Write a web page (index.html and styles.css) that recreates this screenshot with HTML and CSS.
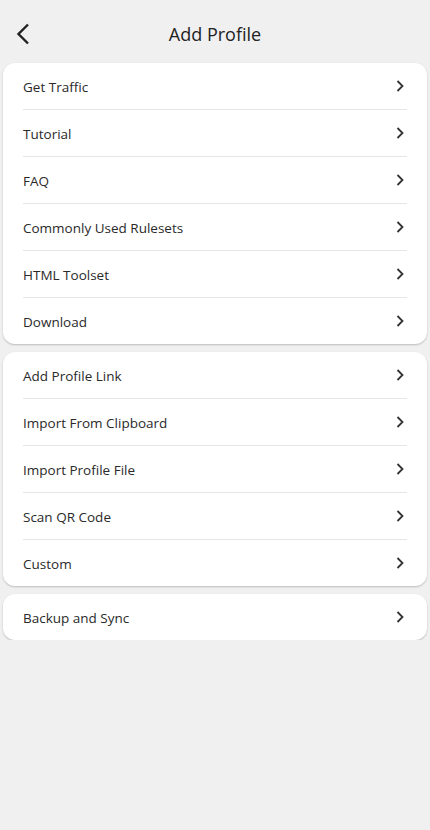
FILE: index.html
```html
<!DOCTYPE html>
<html lang="en">
<head>
<meta charset="utf-8">
<title>Add Profile</title>
<link rel="stylesheet" href="styles.css">
</head>
<body>
<header class="topbar">
  <button class="back" aria-label="Back">
    <svg width="14" height="22" viewBox="0 0 14 22"><path d="M12 1.5 L2.5 11 L12 20.5" fill="none" stroke="#222" stroke-width="2.4"/></svg>
  </button>
  <h1 class="title">Add Profile</h1>
</header>
<main class="content">
  <section class="card">
    <div class="row"><span>Get Traffic</span><svg class="chev" width="8" height="12" viewBox="0 0 8 12"><path d="M1.5 1 L6.5 6 L1.5 11" fill="none" stroke="#333" stroke-width="1.8"/></svg></div>
    <div class="row"><span>Tutorial</span><svg class="chev" width="8" height="12" viewBox="0 0 8 12"><path d="M1.5 1 L6.5 6 L1.5 11" fill="none" stroke="#333" stroke-width="1.8"/></svg></div>
    <div class="row"><span>FAQ</span><svg class="chev" width="8" height="12" viewBox="0 0 8 12"><path d="M1.5 1 L6.5 6 L1.5 11" fill="none" stroke="#333" stroke-width="1.8"/></svg></div>
    <div class="row"><span>Commonly Used Rulesets</span><svg class="chev" width="8" height="12" viewBox="0 0 8 12"><path d="M1.5 1 L6.5 6 L1.5 11" fill="none" stroke="#333" stroke-width="1.8"/></svg></div>
    <div class="row"><span>HTML Toolset</span><svg class="chev" width="8" height="12" viewBox="0 0 8 12"><path d="M1.5 1 L6.5 6 L1.5 11" fill="none" stroke="#333" stroke-width="1.8"/></svg></div>
    <div class="row"><span>Download</span><svg class="chev" width="8" height="12" viewBox="0 0 8 12"><path d="M1.5 1 L6.5 6 L1.5 11" fill="none" stroke="#333" stroke-width="1.8"/></svg></div>
  </section>
  <section class="card">
    <div class="row"><span>Add Profile Link</span><svg class="chev" width="8" height="12" viewBox="0 0 8 12"><path d="M1.5 1 L6.5 6 L1.5 11" fill="none" stroke="#333" stroke-width="1.8"/></svg></div>
    <div class="row"><span>Import From Clipboard</span><svg class="chev" width="8" height="12" viewBox="0 0 8 12"><path d="M1.5 1 L6.5 6 L1.5 11" fill="none" stroke="#333" stroke-width="1.8"/></svg></div>
    <div class="row"><span>Import Profile File</span><svg class="chev" width="8" height="12" viewBox="0 0 8 12"><path d="M1.5 1 L6.5 6 L1.5 11" fill="none" stroke="#333" stroke-width="1.8"/></svg></div>
    <div class="row"><span>Scan QR Code</span><svg class="chev" width="8" height="12" viewBox="0 0 8 12"><path d="M1.5 1 L6.5 6 L1.5 11" fill="none" stroke="#333" stroke-width="1.8"/></svg></div>
    <div class="row"><span>Custom</span><svg class="chev" width="8" height="12" viewBox="0 0 8 12"><path d="M1.5 1 L6.5 6 L1.5 11" fill="none" stroke="#333" stroke-width="1.8"/></svg></div>
  </section>
  <section class="card">
    <div class="row"><span>Backup and Sync</span><svg class="chev" width="8" height="12" viewBox="0 0 8 12"><path d="M1.5 1 L6.5 6 L1.5 11" fill="none" stroke="#333" stroke-width="1.8"/></svg></div>
  </section>
</main>
</body>
</html>
```
FILE: styles.css
```css
html, body {
  margin: 0;
  padding: 0;
  background: #f0f0f0;
  font-family: "Open Sans", "Noto Sans", sans-serif;
  color: #2a2a2a;
}
.topbar {
  height: 63px;
  display: flex;
  align-items: center;
  justify-content: center;
  position: relative;
}
.back {
  position: absolute;
  left: 16px;
  top: 23px;
  padding: 0;
  border: 0;
  background: none;
  display: flex;
}
.title {
  margin: 0;
  font-size: 18px;
  font-weight: 500;
  color: #222;
  padding-top: 4px;
}
.content {
  display: flex;
  flex-direction: column;
  gap: 8px;
  padding: 0 3px;
}
.card {
  background: #fff;
  border-radius: 12px;
  box-shadow: 0 1px 2px rgba(0,0,0,0.22);
  padding: 0 20px;
}
.row {
  height: 46px;
  display: flex;
  align-items: center;
  justify-content: space-between;
  border-bottom: 1px solid #e6e6e6;
  font-size: 13.5px;
  padding-right: 3px;
}
.row:last-child {
  border-bottom: 0;
  height: 46px;
}
.row span {
  padding-top: 1px;
}
.chev {
  display: block;
}
```
